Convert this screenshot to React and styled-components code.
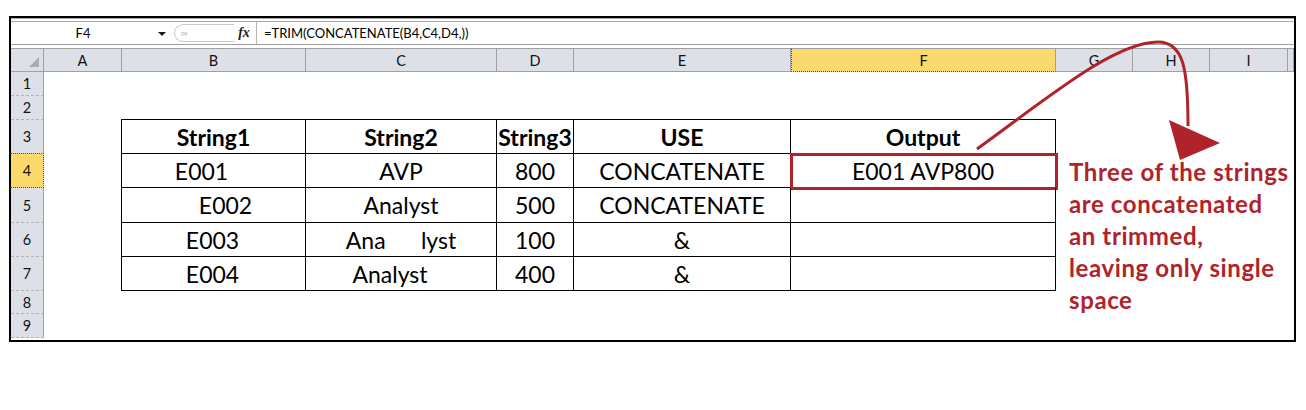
import React from "react";
import styled, { createGlobalStyle } from "styled-components";

const GlobalStyle = createGlobalStyle`
  html, body {
    margin: 0;
    padding: 0;
    background: #ffffff;
  }
  body {
    font-family: "Lato", "Liberation Sans", sans-serif;
    color: #000000;
  }
`;

const COLS = [
  { key: "", width: 33 },
  { key: "A", width: 78 },
  { key: "B", width: 184 },
  { key: "C", width: 191 },
  { key: "D", width: 77 },
  { key: "E", width: 217 },
  { key: "F", width: 265 },
  { key: "G", width: 77 },
  { key: "H", width: 77 },
  { key: "I", width: 78 },
  { key: " ", width: 6 },
];

const ROW_HEIGHTS = [24, 24, 24, 34, 34, 35, 34, 34, 23, 24];

const HEADER_BG = "#dde1e7";
const GRID_GREY = "#a0a0a0";
const PICK_YELLOW = "#fbd96c";
const RED = "#b0232a";

const Page = styled.div`
  position: relative;
  width: 1306px;
  height: 410px;
  padding: 16px 0 0 9px;
  box-sizing: border-box;
`;

const Frame = styled.div`
  width: 1287px;
  height: 326px;
  box-sizing: border-box;
  border: 2px solid #000000;
  overflow: hidden;
`;

const FormulaBar = styled.div`
  display: flex;
  align-items: center;
  height: 27px;
  box-sizing: border-box;
  border-top: 4px double #a9a9a9;
  border-bottom: 1px solid ${GRID_GREY};
  margin-bottom: 3px;
  font-size: 13px;
`;

const NameBox = styled.div`
  width: 144px;
  text-align: center;
`;

const DropArrow = styled.div`
  width: 0;
  height: 0;
  margin: 2px 8px 0 3px;
  border-left: 4px solid transparent;
  border-right: 4px solid transparent;
  border-top: 4px solid #1a1a1a;
`;

const ButtonPill = styled.div`
  display: flex;
  align-items: center;
  width: 60px;
  height: 18px;
  box-sizing: border-box;
  border: 1px solid #c9c9c9;
  border-right: none;
  border-radius: 9px 0 0 9px;
  padding-left: 5px;
  color: #b8b8b8;
  font-size: 10px;
`;

const FxMark = styled.div`
  width: 20px;
  text-align: center;
  font-family: "Liberation Serif", serif;
  font-style: italic;
  font-weight: bold;
  font-size: 14px;
  color: #222222;
  margin-right: 2px;
`;

const FormulaText = styled.div`
  flex: 1;
  height: 100%;
  display: flex;
  align-items: center;
  padding-left: 7px;
  border-left: 1px solid #b5b5b5;
`;

const Sheet = styled.div`
  display: grid;
  grid-template-columns: ${COLS.map((c) => c.width + "px").join(" ")};
  grid-template-rows: ${ROW_HEIGHTS.map((h) => h + "px").join(" ")};
`;

const HeadCell = styled.div`
  display: flex;
  align-items: center;
  justify-content: center;
  box-sizing: border-box;
  background: ${(p) => (p.$picked ? PICK_YELLOW : HEADER_BG)};
  font-size: 14.5px;
  color: #111111;
`;

const Corner = styled(HeadCell)`
  grid-column: 1;
  grid-row: 1;
  justify-content: flex-end;
  align-items: flex-end;
  padding: 0 4px 4px 0;
  border-top: 1px solid ${GRID_GREY};
  border-right: 1px solid ${GRID_GREY};
  border-bottom: 1px solid ${GRID_GREY};
`;

const ColHead = styled(HeadCell)`
  grid-row: 1;
  grid-column: ${(p) => p.$col};
  border-top: 1px solid ${GRID_GREY};
  border-right: 1px solid ${GRID_GREY};
  border-bottom: ${(p) =>
    p.$picked ? `1px dotted ${RED}` : `1px solid ${GRID_GREY}`};
  border-left: ${(p) => (p.$picked ? `1px dotted ${RED}` : "none")};
`;

const RowHead = styled(HeadCell)`
  grid-column: 1;
  grid-row: ${(p) => p.$row};
  border-right: ${(p) =>
    p.$picked ? `1px dotted ${RED}` : `1px solid ${GRID_GREY}`};
  border-bottom: ${(p) =>
    p.$picked ? `1px dotted ${RED}` : `1px dashed #b4b4b4`};
  border-top: ${(p) => (p.$picked ? `1px dotted ${RED}` : "none")};
  margin-top: ${(p) => (p.$picked ? "-1px" : "0")};
`;

const Table = styled.div`
  grid-column: 3 / span 5;
  grid-row: 4 / span 5;
  margin: -1px 0 0 -1px;
  display: grid;
  grid-template-columns: 184px 191px 77px 217px 265px;
  grid-template-rows: 34px 34px 35px 34px 34px;
  border-top: 1px solid #000000;
  border-left: 1px solid #000000;
`;

const Cell = styled.div`
  position: relative;
  display: flex;
  align-items: center;
  justify-content: center;
  box-sizing: border-box;
  border-right: 1px solid #000000;
  border-bottom: 1px solid #000000;
  font-size: 23px;
  font-weight: ${(p) => (p.$head ? 700 : 400)};
  white-space: pre;
  padding: 0 ${(p) => Math.max(0, -p.$dx * 2)}px 0
    ${(p) => Math.max(0, p.$dx * 2)}px;

  ${(p) =>
    p.$selected &&
    `
    &::after {
      content: "";
      position: absolute;
      left: -1px;
      top: -1px;
      right: -3px;
      bottom: -3px;
      border: 3px solid ${RED};
    }
  `}
`;

const Note = styled.div`
  position: absolute;
  left: 1069px;
  top: 156px;
  font-size: 24px;
  letter-spacing: 0.6px;
  font-weight: 700;
  line-height: 32px;
  color: ${RED};
  white-space: nowrap;
`;

const Overlay = styled.svg`
  position: absolute;
  left: 0;
  top: 0;
  pointer-events: none;
`;

const tableRows = [
  [
    { text: "String1" },
    { text: "String2" },
    { text: "String3" },
    { text: "USE" },
    { text: "Output" },
  ],
  [
    { text: "E001", dx: -12 },
    { text: "AVP" },
    { text: "800" },
    { text: "CONCATENATE" },
    { text: "E001 AVP800", selected: true },
  ],
  [
    { text: "E002", dx: 12 },
    { text: "Analyst" },
    { text: "500" },
    { text: "CONCATENATE" },
    { text: "" },
  ],
  [
    { text: "E003", dx: -1 },
    { text: "Ana      lyst" },
    { text: "100" },
    { text: "&" },
    { text: "" },
  ],
  [
    { text: "E004", dx: -1 },
    { text: "Analyst", dx: -11 },
    { text: "400" },
    { text: "&" },
    { text: "" },
  ],
];

const noteLines = [
  "Three of the strings",
  "are concatenated",
  "an trimmed,",
  "leaving only single",
  "space",
];

export default function App() {
  return (
    <Page>
      <GlobalStyle />
      <Frame>
        <FormulaBar>
          <NameBox>F4</NameBox>
          <DropArrow />
          <ButtonPill>≃</ButtonPill>
          <FxMark>fx</FxMark>
          <FormulaText>=TRIM(CONCATENATE(B4,C4,D4,))</FormulaText>
        </FormulaBar>

        <Sheet>
          <Corner>
            <svg width="10" height="10" viewBox="0 0 10 10">
              <polygon points="10,0 10,10 0,10" fill="#a9adb3" />
            </svg>
          </Corner>
          {COLS.slice(1).map((c, i) => (
            <ColHead key={i} $col={i + 2} $picked={c.key === "F"}>
              {c.key.trim()}
            </ColHead>
          ))}
          {ROW_HEIGHTS.slice(1).map((_, i) => (
            <RowHead key={i} $row={i + 2} $picked={i + 1 === 4}>
              {i + 1}
            </RowHead>
          ))}
          <Table>
            {tableRows.map((row, r) =>
              row.map((cell, c) => (
                <Cell
                  key={`${r}-${c}`}
                  $head={r === 0}
                  $dx={cell.dx || 0}
                  $selected={cell.selected}
                >
                  {cell.text}
                </Cell>
              ))
            )}
          </Table>
        </Sheet>
      </Frame>

      <Note>
        {noteLines.map((line) => (
          <div key={line}>{line}</div>
        ))}
      </Note>

      <Overlay width="1306" height="410" viewBox="0 0 1306 410">
        <path
          d="M977 149 C 1050 96, 1115 42, 1158 42 C 1184 42, 1188 70, 1188 126"
          fill="none"
          stroke={RED}
          strokeWidth="3"
        />
        <polygon points="1169,120 1220,143 1180,160" fill={RED} />
      </Overlay>
    </Page>
  );
}
